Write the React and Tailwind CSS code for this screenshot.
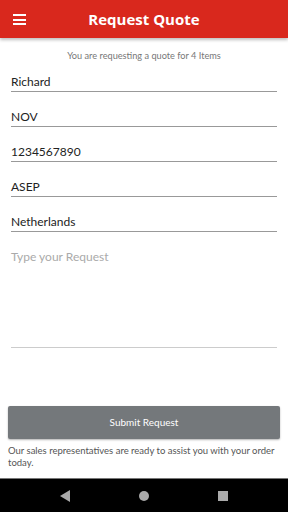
export default function App() {
  const fields = ["Richard", "NOV", "1234567890", "ASEP", "Netherlands"];
  return (
    <div className="w-[288px] h-[512px] flex flex-col bg-white overflow-hidden" style={{ fontFamily: "Lato, 'Noto Sans', sans-serif" }}>
      <header className="h-[38px] bg-[#d9281d] flex items-center relative shadow-[0_2px_3px_rgba(0,0,0,0.25)] z-10">
        <div className="absolute left-[13px] top-[14px] flex flex-col gap-[2.5px]">
          <div className="w-[13px] h-[2px] bg-white" />
          <div className="w-[13px] h-[2px] bg-white" />
          <div className="w-[13px] h-[2px] bg-white" />
        </div>
        <div className="flex-1 text-center text-white font-bold text-[15px] leading-none pt-[1px]" style={{ fontFamily: "'Open Sans', sans-serif" }}>Request Quote</div>
      </header>
      <div className="flex-1 flex flex-col px-[11px]">
        <div className="text-center text-[9.2px] text-[#777] mt-[11px]">You are requesting a quote for 4 Items</div>
        <div className="flex flex-col mt-[8px] gap-[14px]">
          {fields.map((f) => (
            <div key={f} className="border-b border-[#999] pt-[1px] text-[12px] text-[#222] leading-[19px]">{f}</div>
          ))}
        </div>
        <div className="mt-[15px] h-[101px] border-b border-[#ccc] text-[12px] text-[#aaa] leading-[19px]">Type your Request</div>
        <div className="flex-1" />
        <button className="mx-[-3px] h-[33px] rounded-[2px] bg-[#74787b] text-white text-[10px] shadow-[0_1px_2px_rgba(0,0,0,0.3)]">Submit Request</button>
        <div className="mx-[-3px] mt-[6px] mb-[9px] text-[9.5px] leading-[12px] text-[#555]">Our sales representatives are ready to assist you with your order today.</div>
      </div>
      <div className="h-[34px] bg-black border-t border-[#777] flex items-center justify-center gap-[69px]">
        <svg width="10" height="12" viewBox="0 0 10 12"><polygon points="10,0 10,12 0,6" fill="#aaa" /></svg>
        <div className="w-[10px] h-[10px] rounded-full bg-[#aaa]" />
        <div className="w-[10px] h-[10px] bg-[#aaa]" />
      </div>
    </div>
  );
}
